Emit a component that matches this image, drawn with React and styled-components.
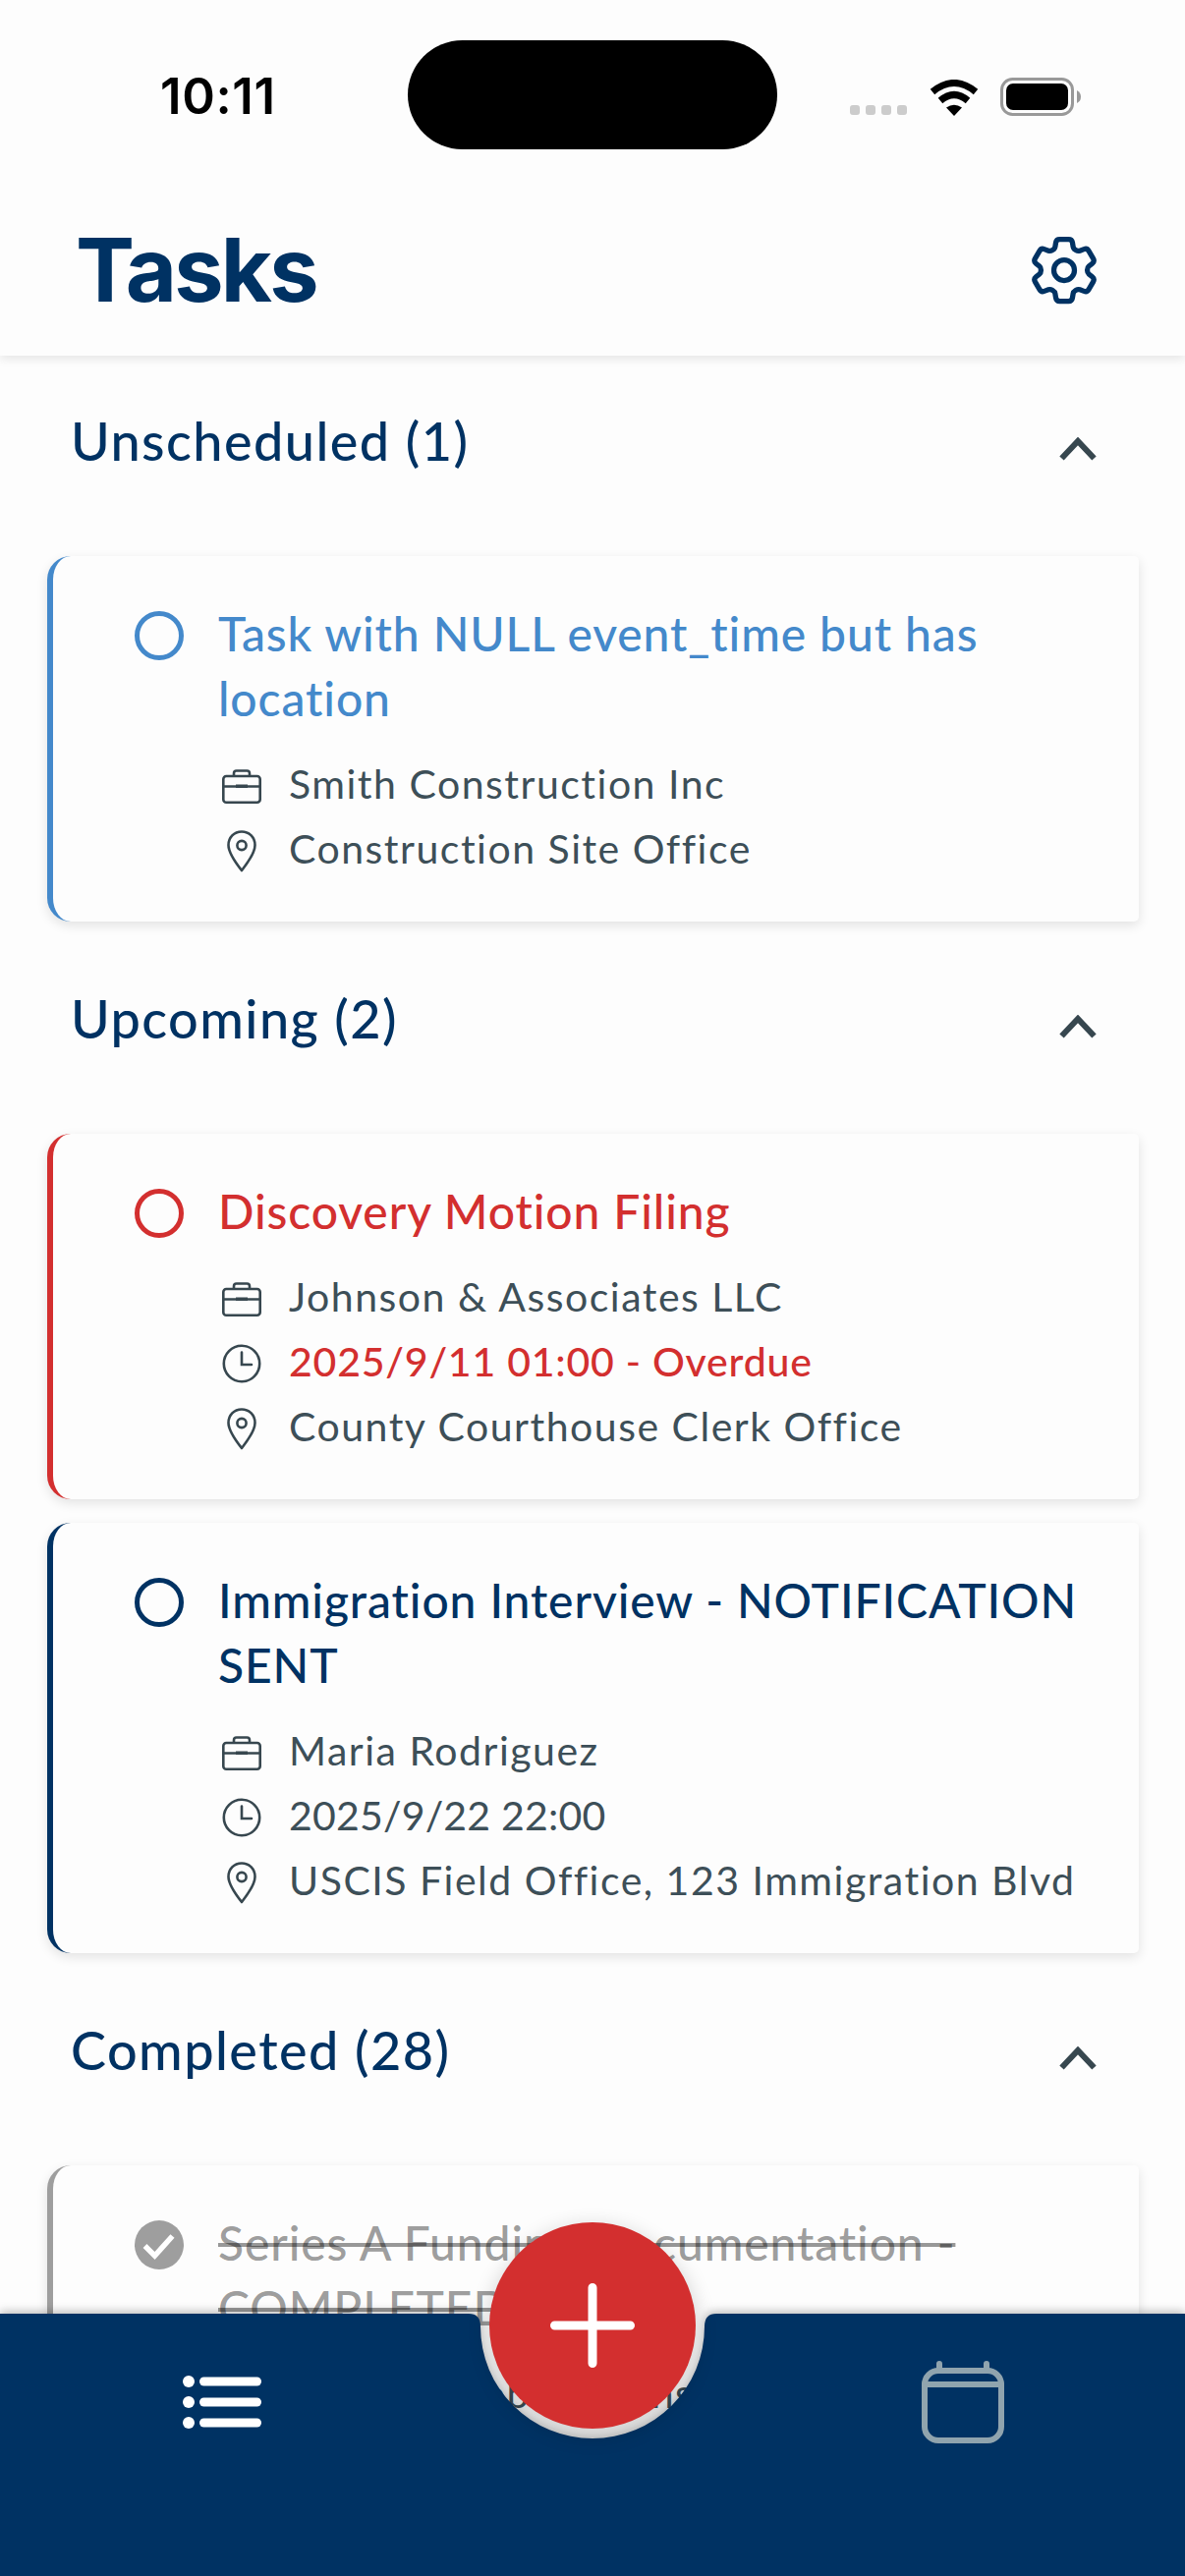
import React from 'react';
import styled, { createGlobalStyle } from 'styled-components';
import { HiOutlineCog6Tooth } from 'react-icons/hi2';

const NAVY = '#003263';
const RED = '#D32F2F';
const BLUE = '#4489CB';
const SLATE = '#37474F';
const GRAY = '#9E9E9E';
const PAPER = '#FDFDFD';

const Global = createGlobalStyle`
  html, body { margin: 0; padding: 0; background: ${PAPER}; }
  * { box-sizing: border-box; }
`;

const Screen = styled.div`
  position: relative;
  width: 1206px;
  height: 2622px;
  overflow: hidden;
  display: flex;
  flex-direction: column;
  background: ${PAPER};
  font-family: Lato, "Noto Sans", sans-serif;
`;

const TopArea = styled.div`
  position: relative;
  z-index: 1;
  background: ${PAPER};
  box-shadow: 0 3px 10px rgba(0, 0, 0, 0.1);
`;

const StatusBar = styled.div`
  display: grid;
  grid-template-columns: 415px 376px 1fr;
  padding-top: 41px;
`;

const Time = styled.div`
  padding-left: 163px;
  font: 600 51px/111px Inter, sans-serif;
  color: #000;
  letter-spacing: 0.6px;
  margin-top: 1px;
`;

const Island = styled.div`
  height: 111px;
  border-radius: 56px;
  background: #000;
`;

const Indicators = styled.div`
  display: flex;
  align-items: flex-end;
  padding: 0 0 35px 74px;
`;

const Dots = styled.div`
  display: flex;
  gap: 6px;
  margin-right: 23px;
  margin-bottom: 1px;
`;

const Dot = styled.span`
  width: 10px;
  height: 10px;
  border-radius: 3px;
  background: #ccc;
`;

const Wifi = styled.svg`
  display: block;
  width: 50px;
  height: 37px;
  margin-right: 22px;
`;

const Battery = styled.svg`
  display: block;
  width: 82px;
  height: 39px;
`;

const Header = styled.header`
  height: 209px;
  padding: 34px 81px 0 77px;
  display: flex;
  align-items: center;
  justify-content: space-between;
`;

const Title = styled.h1`
  margin: 0;
  font: 700 90px/1 Inter, sans-serif;
  color: ${NAVY};
  letter-spacing: -2.8px;
`;

const Gear = styled(HiOutlineCog6Tooth)`
  display: block;
  width: 84px;
  height: 84px;
  color: ${NAVY};
`;

const Content = styled.main`
  flex: 1;
  min-height: 0;
  overflow: hidden;
  padding: 55px 47px 0 48px;
`;

const Section = styled.section`
  margin-bottom: 67px;
`;

const SectionHead = styled.div`
  height: 66px;
  margin-bottom: 83px;
  padding: 0 43px 0 24px;
  display: flex;
  align-items: center;
  justify-content: space-between;
`;

const SectionTitle = styled.h2`
  margin: 0 0 2px;
  font: 500 54px/66px Lato, sans-serif;
  letter-spacing: 1.45px;
  color: ${NAVY};
`;

const Chevron = styled.svg`
  display: block;
  width: 38px;
  height: 24px;
  margin-top: 14px;
  color: ${SLATE};
`;

const Cards = styled.div`
  display: flex;
  flex-direction: column;
  gap: 24px;
`;

const Card = styled.article`
  display: flex;
  gap: 35px;
  padding: 46px 40px 41px 83px;
  background: ${PAPER};
  border-left: 6px solid ${(p) => p.$accent};
  border-radius: 24px 5px 5px 24px;
  box-shadow: 0 4px 12px rgba(0, 0, 0, 0.11);
`;

const Ring = styled.span`
  flex: none;
  width: 50px;
  height: 50px;
  margin-top: 10px;
  border-radius: 50%;
  border: 5px solid ${(p) => p.$color};
`;

const DoneMark = styled.svg`
  flex: none;
  display: block;
  width: 50px;
  height: 50px;
  margin-top: 10px;
`;

const Body = styled.div`
  flex: 1;
  min-width: 0;
`;

const TaskTitle = styled.h3`
  margin: 0 0 21px;
  font: 500 48px/66px Lato, sans-serif;
  letter-spacing: 0.9px;
  color: ${(p) => p.$color};
  ${(p) => p.$done && 'text-decoration: line-through;'}
`;

const MetaRow = styled.div`
  display: flex;
  align-items: center;
  gap: 24px;
  height: 66px;
`;

const MetaIconSlot = styled.span`
  flex: none;
  width: 48px;
  display: flex;
  justify-content: center;
  color: ${SLATE};
  transform: translateY(2px);
`;

const MetaText = styled.span`
  font: 400 41px/66px Lato, sans-serif;
  letter-spacing: ${(p) => (p.$date ? (p.$color ? '0.8px' : '0.2px') : '1.5px')};
  color: ${(p) => p.$color || '#3D4F58'};
  font-weight: ${(p) => (p.$color ? 500 : 400)};
  white-space: nowrap;
`;

const BarShadow = styled.div`
  position: absolute;
  left: 0;
  right: 0;
  bottom: 0;
  z-index: 2;
  filter: drop-shadow(0 -2px 5px rgba(0, 0, 0, 0.28));
`;

const TabBar = styled.nav`
  height: 267px;
  padding: 48px 184px 0 186px;
  display: flex;
  align-items: flex-start;
  justify-content: space-between;
  background: ${NAVY};
  clip-path: path('M0 0 H477 Q489 0 489 13 A114 114 0 0 0 717 13 Q717 0 729 0 H1206 V267 H0 Z');
`;

const ListIcon = styled.svg`
  display: block;
  width: 80px;
  height: 54px;
  margin-top: 15px;
`;

const CalendarIcon = styled.svg`
  display: block;
  width: 84px;
  height: 84px;
`;

const Fab = styled.button`
  position: absolute;
  z-index: 3;
  left: 498px;
  bottom: 150px;
  width: 210px;
  height: 210px;
  padding: 0;
  border: 0;
  border-radius: 50%;
  background: ${RED};
  display: flex;
  align-items: center;
  justify-content: center;
  box-shadow: 0 6px 22px rgba(0, 0, 0, 0.2);
`;

const PlusIcon = styled.svg`
  display: block;
  width: 86px;
  height: 86px;
`;

const Briefcase = () => (
  <svg width="40" height="35" viewBox="0 0 40 35" fill="none" stroke="currentColor" strokeWidth="2.6" style={{ display: 'block' }}>
    <rect x="1.3" y="7" width="37.4" height="26.7" rx="3" />
    <path d="M12 7V4.2Q12 1.5 14.7 1.5H25.3Q28 1.5 28 4.2V7" />
    <path d="M1.3 17.5H38.7" />
    <rect x="14" y="15.5" width="12" height="3.5" fill="currentColor" stroke="none" />
  </svg>
);

const Clock = () => (
  <svg width="40" height="40" viewBox="0 0 40 40" fill="none" stroke="currentColor" strokeWidth="2.6" strokeLinecap="round" style={{ display: 'block' }}>
    <circle cx="20" cy="20" r="18.2" />
    <path d="M20 8.5V21H30" />
  </svg>
);

const Pin = () => (
  <svg width="30" height="43" viewBox="0 0 30 43" fill="none" stroke="currentColor" strokeWidth="2.6" strokeLinejoin="round" style={{ display: 'block' }}>
    <path d="M15 1.5C7.2 1.5 1.5 7.5 1.5 15.2C1.5 23.5 9.5 34 15 41C20.5 34 28.5 23.5 28.5 15.2C28.5 7.5 22.8 1.5 15 1.5Z" />
    <circle cx="15" cy="15.5" r="4.6" />
  </svg>
);

const metaIcons = { case: Briefcase, clock: Clock, pin: Pin };

const Meta = ({ icon, color, children }) => {
  const Icon = metaIcons[icon];
  return (
    <MetaRow>
      <MetaIconSlot><Icon /></MetaIconSlot>
      <MetaText $color={color} $date={icon === 'clock'}>{children}</MetaText>
    </MetaRow>
  );
};

const Task = ({ accent, color, title, done, meta }) => (
  <Card $accent={accent}>
    {done ? (
      <DoneMark viewBox="0 0 50 50">
        <circle cx="25" cy="25" r="25" fill={GRAY} />
        <path d="M10.5 26L20.5 36L38.5 16" fill="none" stroke="#fff" strokeWidth="5.5" />
      </DoneMark>
    ) : (
      <Ring $color={accent} />
    )}
    <Body>
      <TaskTitle $color={color} $done={done}>{title}</TaskTitle>
      {meta.map((m) => (
        <Meta key={m.text} icon={m.icon} color={m.color}>{m.text}</Meta>
      ))}
    </Body>
  </Card>
);

const Group = ({ title, children }) => (
  <Section>
    <SectionHead>
      <SectionTitle>{title}</SectionTitle>
      <Chevron viewBox="0 0 38 24">
        <path d="M2.5 21.5L19 4L35.5 21.5" fill="none" stroke="currentColor" strokeWidth="6" />
      </Chevron>
    </SectionHead>
    <Cards>{children}</Cards>
  </Section>
);

export default function App() {
  return (
    <Screen>
      <Global />
      <TopArea>
        <StatusBar>
          <Time>10:11</Time>
          <Island />
          <Indicators>
            <Dots><Dot /><Dot /><Dot /><Dot /></Dots>
            <Wifi viewBox="0 0 50 37">
              <path d="M3 12.5Q25 -5.5 47 12.5" fill="none" stroke="#000" strokeWidth="7" />
              <path d="M11 21.5Q25 9.5 39 21.5" fill="none" stroke="#000" strokeWidth="7" />
              <path d="M17 28.5Q25 23 33 28.5L25 37Z" fill="#000" />
            </Wifi>
            <Battery viewBox="0 0 82 39">
              <rect x="1.5" y="1.5" width="72" height="36" rx="11" fill="none" stroke="#999" strokeWidth="3" />
              <rect x="6" y="6" width="63" height="27" rx="7" fill="#000" />
              <path d="M78 13Q82 15 82 19.5Q82 24 78 26Z" fill="#999" />
            </Battery>
          </Indicators>
        </StatusBar>
        <Header>
          <Title>Tasks</Title>
          <Gear />
        </Header>
      </TopArea>
      <Content>
        <Group title="Unscheduled (1)">
          <Task
            accent={BLUE}
            color={BLUE}
            title="Task with NULL event_time but has location"
            meta={[
              { icon: 'case', text: 'Smith Construction Inc' },
              { icon: 'pin', text: 'Construction Site Office' },
            ]}
          />
        </Group>
        <Group title="Upcoming (2)">
          <Task
            accent={RED}
            color={RED}
            title="Discovery Motion Filing"
            meta={[
              { icon: 'case', text: 'Johnson & Associates LLC' },
              { icon: 'clock', text: '2025/9/11 01:00 - Overdue', color: RED },
              { icon: 'pin', text: 'County Courthouse Clerk Office' },
            ]}
          />
          <Task
            accent={NAVY}
            color={NAVY}
            title="Immigration Interview - NOTIFICATION SENT"
            meta={[
              { icon: 'case', text: 'Maria Rodriguez' },
              { icon: 'clock', text: '2025/9/22 22:00' },
              { icon: 'pin', text: 'USCIS Field Office, 123 Immigration Blvd' },
            ]}
          />
        </Group>
        <Group title="Completed (28)">
          <Task
            done
            accent={GRAY}
            color="rgba(0, 0, 0, 0.4)"
            title="Series A Funding Documentation - COMPLETED"
            meta={[{ icon: 'case', text: 'Startup Global Counsel' }]}
          />
        </Group>
      </Content>
      <BarShadow>
        <TabBar>
          <ListIcon viewBox="0 0 80 54">
            <g fill="#fff">
              <circle cx="6" cy="6" r="6" />
              <circle cx="6" cy="27" r="6" />
              <circle cx="6" cy="48" r="6" />
              <rect x="17" y="1.5" width="63" height="9" rx="4.5" />
              <rect x="17" y="22.5" width="63" height="9" rx="4.5" />
              <rect x="17" y="43.5" width="63" height="9" rx="4.5" />
            </g>
          </ListIcon>
          <CalendarIcon viewBox="0 0 84 84" fill="none" stroke="#90A4AE" strokeWidth="6" strokeLinecap="round">
            <rect x="3" y="10" width="78" height="71" rx="14" />
            <path d="M3 24H81" />
            <path d="M18 3V9M66 3V9" />
          </CalendarIcon>
        </TabBar>
      </BarShadow>
      <Fab aria-label="Add task">
        <PlusIcon viewBox="0 0 86 86">
          <path d="M43 4.5V81.5M4.5 43H81.5" fill="none" stroke="#fff" strokeWidth="9" strokeLinecap="round" />
        </PlusIcon>
      </Fab>
    </Screen>
  );
}
